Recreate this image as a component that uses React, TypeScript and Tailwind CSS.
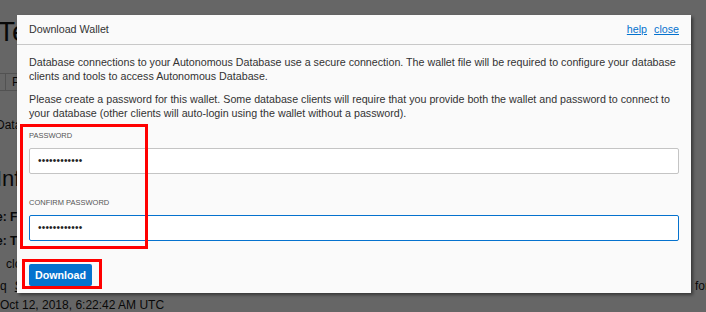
import React from 'react';

const Background: React.FC = () => (
  <div className="flex h-[312px] w-[706px] flex-col overflow-hidden bg-white pt-[18px] text-[12px] leading-[14px] text-[#161616]">
    <div className="-ml-[2px] text-[28px] leading-[28px]">Test DB</div>
    <div className="mt-[27px] flex h-[23px] w-[300px] border-y border-[#ccc]">
      <div className="ml-[5px] flex h-full items-center border-x border-[#ccc] px-[6px]">Performance Hub</div>
    </div>
    <div className="-ml-[4px] mt-[27px]">Database</div>
    <div className="-ml-[4px] mt-[36px] text-[22px] leading-[22px]">Info</div>
    <div className="-ml-[4px] mt-[20px] font-bold">e: Free</div>
    <div className="-ml-[4px] mt-[10px] font-bold">e: Trial</div>
    <div className="ml-[6px] mt-[9px]">close</div>
    <div className="mt-[8px] grid grid-cols-[695px_auto]">
      <div className="flex gap-[8px]">
        <span>q</span>
        <span className="underline">Show</span>
        <span className="underline">Edit</span>
      </div>
      <span className="whitespace-nowrap">for details</span>
    </div>
    <div className="mt-[5px]">Oct 12, 2018, 6:22:42 AM UTC</div>
  </div>
);

const Field: React.FC<{ label: string; focused?: boolean }> = ({ label, focused }) => (
  <div>
    <div className="text-[7.5px] uppercase leading-[10px] text-[#555]">{label}</div>
    <div
      className={
        'mt-[7px] flex h-[26px] items-center rounded-[2px] bg-white pl-[8px] ' +
        (focused ? 'border border-[#0572ce]' : 'border border-[#c4c4c4]')
      }
    >
      <span className="text-[10px] leading-none tracking-[0.2px] text-[#222]">••••••••••••</span>
    </div>
  </div>
);

const App: React.FC = () => {
  return (
    <div className="relative h-[312px] w-[706px] overflow-hidden" style={{ fontFamily: '"Liberation Sans", Arial, sans-serif' }}>
      <Background />
      <div className="absolute inset-0 bg-black/60" />
      <div className="absolute left-[17px] top-[15px] h-[278px] w-[674px] bg-[#fafafa] shadow-[2px_2px_3px_rgba(0,0,0,0.45)]">
        <div className="flex h-[30px] items-center justify-between border-b border-[#c8c8c8] px-[12px] text-[10.7px]">
          <span className="text-[#333]">Download Wallet</span>
          <div className="flex gap-[7px] text-[#0572ce] underline">
            <span>help</span>
            <span>close</span>
          </div>
        </div>
        <div className="px-[12px] pt-[10px] text-[10.7px] leading-[14px] text-[#333]">
          <p>
            Database connections to your Autonomous Database use a secure connection. The wallet file will be required to configure your database
            clients and tools to access Autonomous Database.
          </p>
          <p className="mt-[9px]">
            Please create a password for this wallet. Some database clients will require that you provide both the wallet and password to connect to
            your database (other clients will auto-login using the wallet without a password).
          </p>
          <div className="mt-[11px] flex flex-col gap-[24px]">
            <Field label="Password" />
            <Field label="Confirm Password" focused />
          </div>
          <button className="mt-[23px] h-[22px] rounded-[2px] bg-[#0572ce] px-[6px] text-[10.7px] font-bold text-white">Download</button>
        </div>
      </div>
      <div className="absolute left-[20px] top-[124px] h-[125px] w-[128px] border-[3px] border-[#f00]" />
      <div className="absolute left-[22px] top-[259px] h-[30px] w-[80px] border-[3px] border-[#f00]" />
    </div>
  );
};

export default App;
